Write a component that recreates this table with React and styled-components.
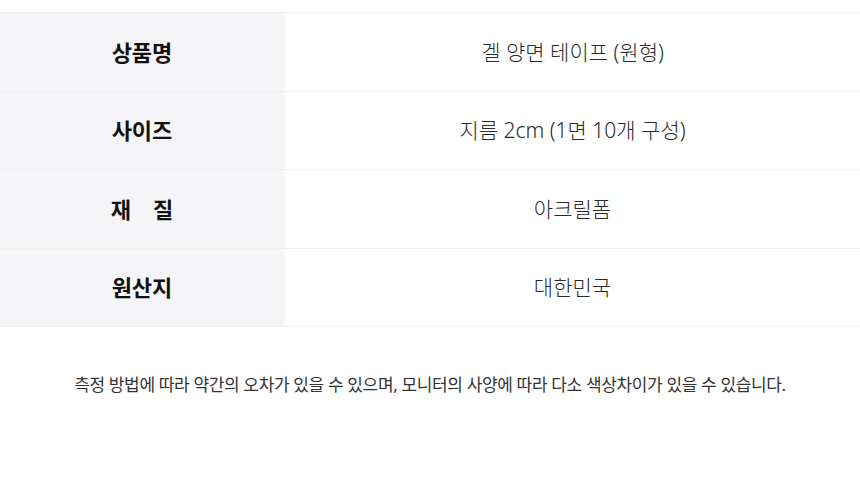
import React from 'react'
import styled, { createGlobalStyle } from 'styled-components'

const rows = [
  { label: '상품명', value: '겔 양면 테이프 (원형)' },
  { label: '사이즈', value: '지름 2cm (1면 10개 구성)' },
  { label: '재\u3000질', value: '아크릴폼' },
  { label: '원산지', value: '대한민국' },
]

function App() {
  return (
    <>
      <GlobalStyle />
      <Page>
        <Table>
          {rows.map((row) => (
            <Row key={row.label}>
              <Label>{row.label}</Label>
              <Value>{row.value}</Value>
            </Row>
          ))}
        </Table>
        <Note>
          측정 방법에 따라 약간의 오차가 있을 수 있으며, 모니터의 사양에 따라 다소 색상차이가 있을 수 있습니다.
        </Note>
      </Page>
    </>
  )
}

export default App

const GlobalStyle = createGlobalStyle`
  body {
    margin: 0;
    background: #ffffff;
    font-family: "Noto Sans", "Noto Sans CJK KR", sans-serif;
  }
`

const Page = styled.div`
  width: 860px;
  padding-top: 12px;
`

const Table = styled.div`
  border-top: 1px solid #f0f0f0;
`

const Row = styled.div`
  display: grid;
  grid-template-columns: 285px 1fr;
  height: 77.5px;
  border-bottom: 1px solid #f0f0f0;
`

const Label = styled.div`
  display: flex;
  align-items: center;
  justify-content: center;
  padding-bottom: 2px;
  background: #f5f5f7;
  border-right: 1px solid #f7f7f7;
  font-size: 22px;
  font-weight: 700;
  color: #111;
  white-space: pre;
`

const Value = styled.div`
  display: flex;
  align-items: center;
  justify-content: center;
  padding-bottom: 2px;
  font-size: 21px;
  font-weight: 300;
  color: #2a2a2a;
`

const Note = styled.p`
  margin: 44px 0 0;
  text-align: center;
  font-size: 17px;
  font-weight: 400;
  color: #333;
  letter-spacing: -0.35px;
`
